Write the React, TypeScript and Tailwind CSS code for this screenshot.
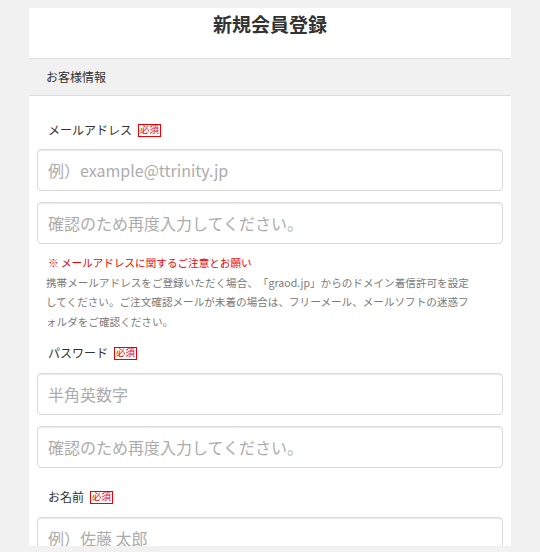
const FONT = "font-['Noto_Sans_CJK_JP','Noto_Sans',sans-serif]";

const Required = () => (
  <span className="inline-flex h-[13px] items-center border border-[#ee0000] px-px text-[9.5px] leading-none text-[#ee0000]">
    必須
  </span>
);

const FieldLabel = ({ label, className = '' }: { label: string; className?: string }) => (
  <div className={`flex h-5 items-center gap-[6px] pl-[11px] text-[12px] text-[#333] ${className}`}>
    <span>{label}</span>
    <Required />
  </div>
);

const TextField = ({ placeholder, className = '' }: { placeholder: string; className?: string }) => (
  <input
    type="text"
    placeholder={placeholder}
    className={`block h-[42px] w-full rounded-[4px] border border-[#dadada] bg-white px-[10px] text-[16px] text-[#333] shadow-[inset_0_1px_1px_rgba(0,0,0,0.09)] outline-none placeholder:text-[#acacac] ${className}`}
  />
);

export default function App() {
  return (
    <div className={`h-[552px] overflow-hidden bg-[#f1f1f1] pt-2 pb-[6px] [text-spacing-trim:space-all] ${FONT}`}>
      <div className="mx-[29px] h-full overflow-hidden bg-white">
        {/* Title */}
        <div className="h-[51px] border-b border-[#dddddd] pt-[2px]">
          <h1 className="text-center text-[19px] font-bold leading-[28px] text-[#333]">新規会員登録</h1>
        </div>

        {/* Section header */}
        <div className="flex h-[37px] items-center border-b border-[#dddddd] bg-[#f1f1f1] pl-[17px] text-[12px] text-[#333]">
          お客様情報
        </div>

        <form className="px-2">
          {/* Email */}
          <FieldLabel label="メールアドレス" className="mt-6" />
          <TextField placeholder="例）example@ttrinity.jp" className="mt-[9px]" />
          <TextField placeholder="確認のため再度入力してください。" className="mt-[11px]" />

          <div className="mt-[9px] w-[439px] pl-[9px] text-[10.6px] leading-[19.5px] [text-spacing-trim:space-all]">
            <p className="pl-[2px] text-[#ee0000]">※ メールアドレスに関するご注意とお願い</p>
            <p className="text-[#7a7a7a]">
              携帯メールアドレスをご登録いただく場合、「graod.jp」からのドメイン着信許可を設定してください。ご注文確認メールが未着の場合は、フリーメール、メールソフトの迷惑フォルダをご確認ください。
            </p>
          </div>

          {/* Password */}
          <FieldLabel label="パスワード" className="mt-3" />
          <TextField placeholder="半角英数字" className="mt-[10px]" />
          <TextField placeholder="確認のため再度入力してください。" className="mt-[11px]" />

          {/* Name */}
          <FieldLabel label="お名前" className="mt-[19px]" />
          <TextField placeholder="例）佐藤 太郎" className="mt-[10px]" />
        </form>
      </div>
    </div>
  );
}
